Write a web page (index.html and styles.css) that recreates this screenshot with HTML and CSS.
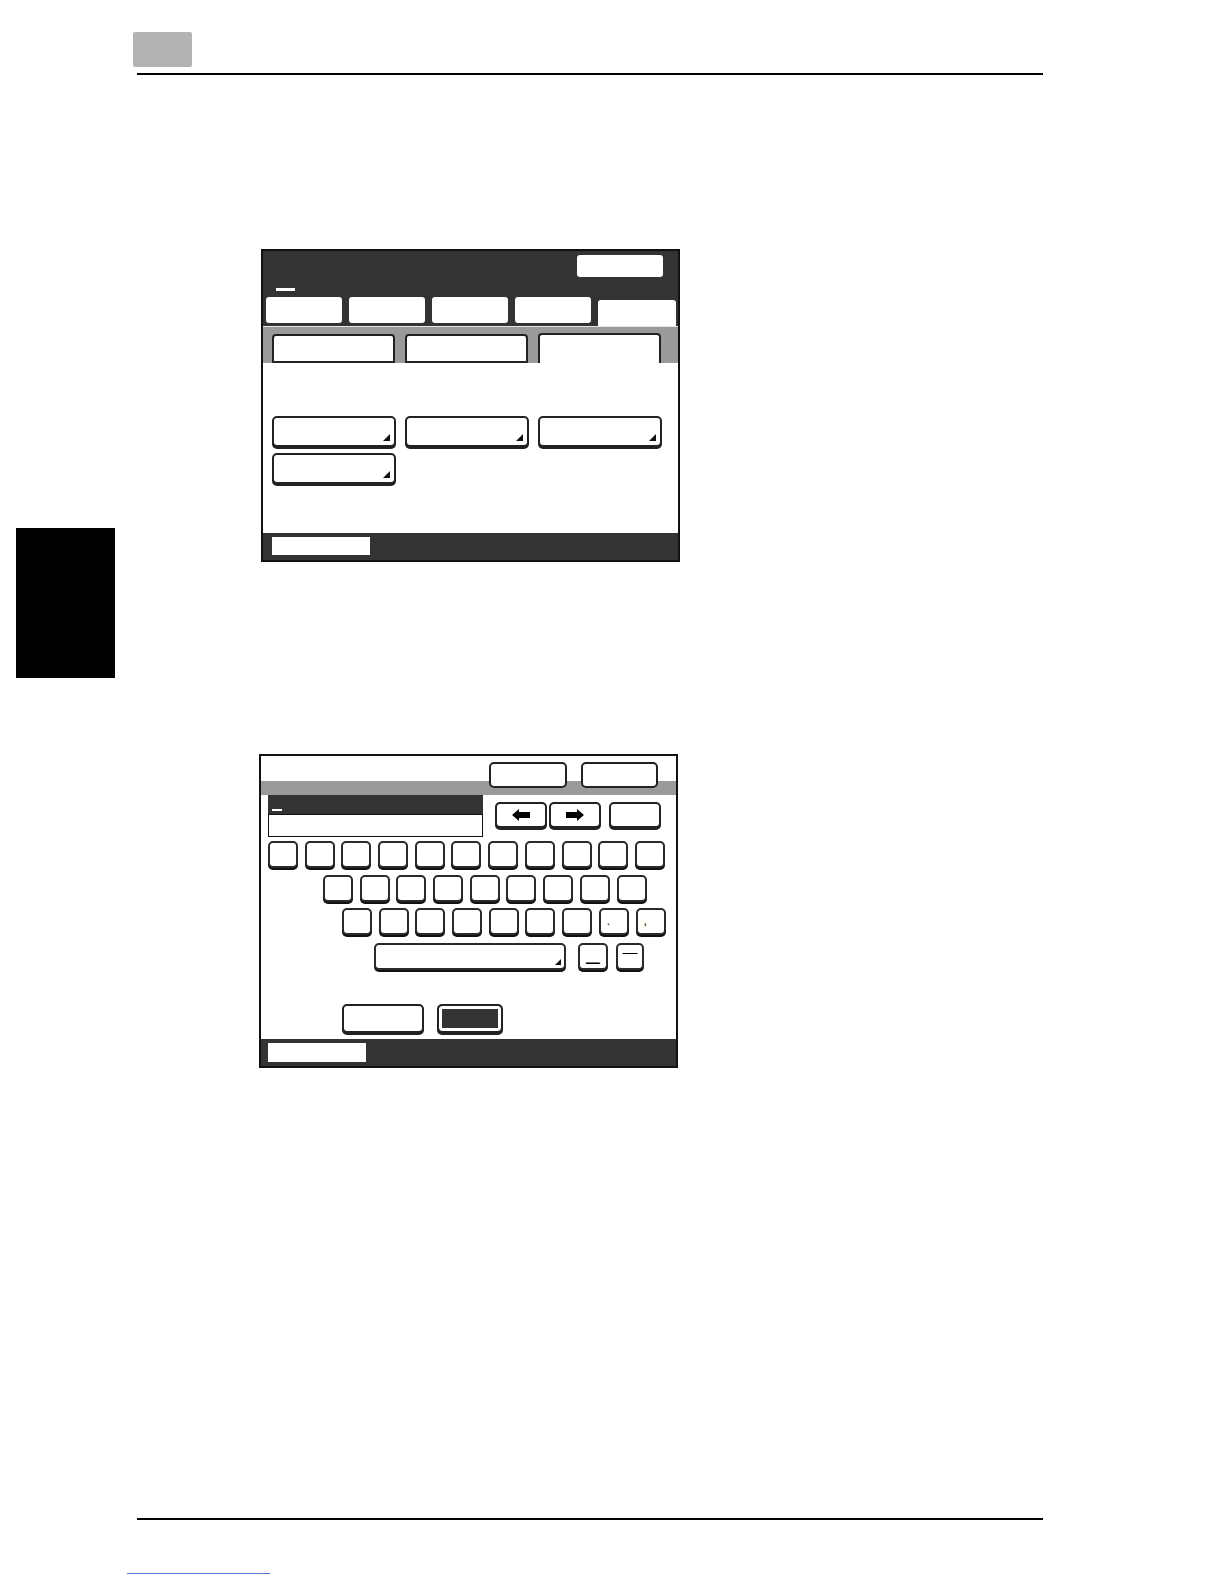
FILE: index.html
```html
<!DOCTYPE html>
<html lang="en">
<head>
<meta charset="utf-8">
<title>Manual page</title>
<link rel="stylesheet" href="styles.css">
</head>
<body>
<div class="page">
  <header class="top">
    <div class="chap-box"></div>
    <div class="rule"></div>
  </header>

  <div class="middle">
    <aside class="gutter"><div class="thumb"></div></aside>
    <main class="content">
      <!-- Screen 1 -->
      <section class="screen s1">
        <div class="s1-top">
          <div class="s1-btnrow"><div class="s1-topbtn"></div></div>
          <div class="s1-dash"></div>
          <div class="s1-tabs">
            <div class="s1-tab"></div>
            <div class="s1-tab"></div>
            <div class="s1-tab"></div>
            <div class="s1-tab"></div>
            <div class="s1-tab sel"></div>
          </div>
        </div>
        <div class="s1-band">
          <div class="subtab"></div>
          <div class="subtab"></div>
          <div class="subtab sel"></div>
        </div>
        <div class="s1-body">
          <div class="opt"><span class="tri"></span></div>
          <div class="opt"><span class="tri"></span></div>
          <div class="opt"><span class="tri"></span></div>
          <div class="opt"><span class="tri"></span></div>
        </div>
        <div class="statusbar"><div class="status-box"></div></div>
      </section>

      <!-- Screen 2 -->
      <section class="screen s2">
        <div class="s2-head">
          <div class="btn s2-hbtn a"></div>
          <div class="btn s2-hbtn b"></div>
        </div>
        <div class="s2-edit">
          <div class="s2-field">
            <div class="s2-dark"><span class="cursor"></span></div>
            <div class="s2-input"></div>
          </div>
          <div class="s2-nav">
            <div class="btn navbtn"><svg width="18" height="12" viewBox="0 0 18 12"><path d="M0 6L7 0V3H18V9H7V12Z" fill="#000"/></svg></div>
            <div class="btn navbtn"><svg width="18" height="12" viewBox="0 0 18 12"><path d="M18 6L11 0V3H0V9H11V12Z" fill="#000"/></svg></div>
            <div class="btn navbtn wide"></div>
          </div>
        </div>
        <div class="kb-row r1">
          <div class="key"></div><div class="key"></div><div class="key"></div><div class="key"></div><div class="key"></div><div class="key"></div><div class="key"></div><div class="key"></div><div class="key"></div><div class="key"></div><div class="key"></div>
        </div>
        <div class="kb-row r2">
          <div class="key"></div><div class="key"></div><div class="key"></div><div class="key"></div><div class="key"></div><div class="key"></div><div class="key"></div><div class="key"></div><div class="key"></div>
        </div>
        <div class="kb-row r3">
          <div class="key"></div><div class="key"></div><div class="key"></div><div class="key"></div><div class="key"></div><div class="key"></div><div class="key"></div><div class="key punct">.</div><div class="key punct">,</div>
        </div>
        <div class="kb-row r4">
          <div class="key space"><span class="tri"></span></div>
          <div class="key under">_</div>
          <div class="key dash">—</div>
        </div>
        <div class="s2-actions">
          <div class="btn act"></div>
          <div class="btn act dark"></div>
        </div>
        <div class="statusbar s2-status"><div class="status-box"></div></div>
      </section>
    </main>
  </div>

  <footer class="bottom">
    <div class="rule"></div>
    <div class="link-line"></div>
  </footer>
</div>
</body>
</html>
```

FILE: styles.css
```css
html, body {
  margin: 0;
  padding: 0;
  background: #fff;
  font-family: "Liberation Sans", Arial, sans-serif;
}

.page {
  width: 1224px;
  height: 1584px;
  overflow: hidden;
}

/* header */
.top {
  padding-top: 32px;
}
.chap-box {
  margin-left: 133px;
  width: 59px;
  height: 35px;
  background: #b3b3b3;
  border-radius: 2px;
}
.rule {
  margin-left: 137px;
  width: 906px;
  height: 2px;
  background: #000;
}
.top .rule {
  margin-top: 6px;
}

/* middle */
.middle {
  height: 1443px;
  display: flex;
}
.gutter {
  margin-left: 16px;
  width: 99px;
}
.thumb {
  margin-top: 453px;
  height: 150px;
  background: #000;
}
.content {
  display: flex;
  flex-direction: column;
  align-items: flex-start;
}

/* generic screen */
.screen {
  width: 419px;
  box-sizing: border-box;
  border: 2px solid #111;
  background: #fff;
  display: flex;
  flex-direction: column;
}
.s1 {
  height: 313px;
  margin-top: 174px;
  margin-left: 146px;
}
.s2 {
  height: 314px;
  margin-top: 192px;
  margin-left: 144px;
}

/* screen 1 */
.s1-top {
  height: 75px;
  box-sizing: border-box;
  background: #333;
  padding-top: 4px;
  display: flex;
  flex-direction: column;
}
.s1-btnrow {
  display: flex;
  justify-content: flex-end;
  padding-right: 15px;
}
.s1-topbtn {
  width: 86px;
  height: 22px;
  background: #fff;
  border-radius: 3px;
}
.s1-dash {
  margin: 11px 0 0 13px;
  width: 19px;
  height: 3px;
  background: #fff;
}
.s1-tabs {
  margin-top: 6px;
  height: 29px;
  display: flex;
  align-items: flex-start;
  gap: 7px;
  padding-left: 3px;
}
.s1-tab {
  width: 76px;
  height: 26px;
  background: #fff;
  border-radius: 3px;
}
.s1-tab.sel {
  width: 78px;
  margin-top: 3px;
  height: 26px;
  border-radius: 3px 3px 0 0;
}
.s1-band {
  height: 37px;
  box-sizing: border-box;
  background: #9a9a9a;
  border-top: 1px solid #e6e6e6;
  display: flex;
  align-items: flex-end;
  gap: 10px;
  padding-left: 9px;
}
.subtab {
  width: 123px;
  height: 29px;
  box-sizing: border-box;
  background: #fff;
  border: 2px solid #222;
  border-radius: 4px 4px 0 0;
}
.subtab.sel {
  height: 30px;
  border-bottom: none;
}
.s1-body {
  flex: 1;
  padding: 53px 0 0 9px;
  display: grid;
  grid-template-columns: repeat(3, 124px);
  grid-auto-rows: 31px;
  column-gap: 9px;
  row-gap: 6px;
  align-content: start;
}
.opt {
  box-sizing: border-box;
  border: 2px solid #222;
  border-radius: 5px;
  background: #fff;
  box-shadow: 0 2px 0 #222;
  display: flex;
  align-items: flex-end;
  justify-content: flex-end;
  padding: 0 4px 4px 0;
}
.tri {
  width: 0;
  height: 0;
  border-left: 7px solid transparent;
  border-bottom: 7px solid #111;
}
.statusbar {
  height: 27px;
  box-sizing: border-box;
  background: #333;
  padding: 4px 0 0 9px;
}
.status-box {
  width: 98px;
  height: 18px;
  background: #fff;
}

/* screen 2 */
.btn {
  box-sizing: border-box;
  border: 2px solid #222;
  border-radius: 5px;
  background: #fff;
  box-shadow: 0 2px 0 #222;
}
.s2-head {
  height: 39px;
  box-sizing: border-box;
  background: linear-gradient(to bottom, #fff 0, #fff 25px, #9a9a9a 25px, #9a9a9a 39px);
  display: flex;
  padding: 6px 0 0 228px;
  gap: 14px;
}
.s2-hbtn {
  height: 26px;
  box-shadow: none;
}
.s2-hbtn.a { width: 78px; }
.s2-hbtn.b { width: 77px; }

.s2-edit {
  display: flex;
  align-items: flex-start;
}
.s2-field {
  margin-left: 7px;
  width: 215px;
}
.s2-dark {
  height: 19px;
  background: #333;
  display: flex;
  align-items: flex-end;
  padding: 0 0 3px 4px;
  box-sizing: border-box;
}
.cursor {
  width: 10px;
  height: 2px;
  background: #fff;
}
.s2-input {
  height: 23px;
  box-sizing: border-box;
  border: 1.5px solid #111;
  background: #fff;
}
.s2-nav {
  margin: 7px 0 0 12px;
  display: flex;
  gap: 2px;
}
.navbtn {
  width: 52px;
  height: 26px;
  display: flex;
  align-items: center;
  justify-content: center;
}
.navbtn.wide {
  margin-left: 6px;
}

.kb-row {
  display: flex;
  gap: 6.7px;
}
.r1 { margin-top: 4px; padding-left: 7px; }
.r2 { margin-top: 7px; padding-left: 62px; }
.r3 { margin-top: 6px; padding-left: 81px; }
.r4 { margin-top: 8px; padding-left: 113px; gap: 0; }

.key {
  width: 30px;
  height: 27px;
  box-sizing: border-box;
  border: 2px solid #2a2a2a;
  border-radius: 5px;
  background: #fff;
  box-shadow: 0 2px 0 #111;
  font-family: "Liberation Sans", Arial, sans-serif;
  color: #000;
}
.key.punct {
  font-size: 12px;
  line-height: 1;
  display: flex;
  align-items: flex-end;
  padding: 0 0 6px 6px;
}
.key.space {
  width: 192px;
  display: flex;
  align-items: flex-end;
  justify-content: flex-end;
  padding: 0 3px 3px 0;
}
.key.space .tri {
  border-left-width: 6px;
  border-bottom-width: 6px;
}
.key.under {
  width: 30px;
  margin-left: 12px;
  font-size: 24px;
  line-height: 12px;
  text-align: center;
}
.key.dash {
  width: 28px;
  margin-left: 8px;
  font-size: 15px;
  line-height: 14px;
  text-align: center;
}

.s2-actions {
  margin-top: 34px;
  padding-left: 81px;
  display: flex;
  gap: 13px;
}
.act {
  width: 82px;
  height: 29px;
}
.act.dark {
  width: 66px;
  background: #333;
  box-shadow: inset 0 0 0 3px #fff, 0 2px 0 #222;
}
.s2-status {
  margin-top: auto;
  padding: 4px 0 0 7px;
}
.s2-status .status-box {
  height: 19px;
}

/* footer */
.link-line {
  margin-top: 53px;
  margin-left: 127px;
  width: 143px;
  height: 1px;
  background: #5b79d6;
}
```
